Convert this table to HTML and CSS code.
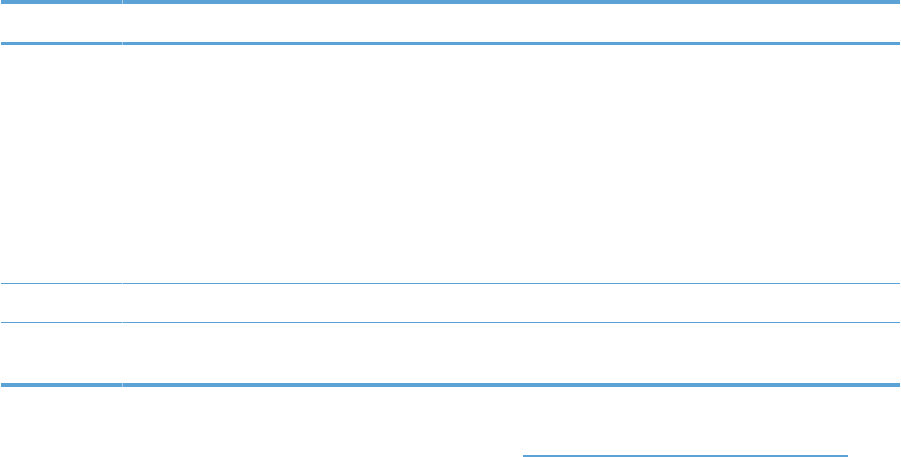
FILE: index.html
```
<!DOCTYPE html>
<html lang="en">
<head>
  <meta charset="UTF-8" />
  <meta name="viewport" content="width=device-width, initial-scale=1.0"/>
  <title>Table</title>
  <link rel="stylesheet" href="styles.css">
</head>
<body>
  <div class="table">
    <div class="rule thick"><span class="left"></span><span class="right"></span></div>
    <div class="row head"></div>
    <div class="rule mid"><span class="left"></span><span class="right"></span></div>
    <div class="row tall"></div>
    <div class="rule thin"><span class="left"></span><span class="right"></span></div>
    <div class="row short"></div>
    <div class="rule thin"><span class="left"></span><span class="right"></span></div>
    <div class="row last"></div>
    <div class="rule thick"><span class="left"></span><span class="right"></span></div>
  </div>

  <div class="after">
    <a class="link" href="#"></a>
  </div>
</body>
</html>
```

FILE: styles.css
```
* {
  box-sizing: border-box;
  margin: 0;
  padding: 0;
}
body {
  background: #ffffff;
  font-family: 'Liberation Sans', Arial, sans-serif;
  width: 901px;
  height: 457px;
  overflow: hidden;
}
.table {
  margin-left: 1px;
  width: 899px;
}
.rule {
  display: flex;
  gap: 1px;
  background: #a9cdea;
}
.rule .left {
  width: 121px;
  background: #5ba3d6;
}
.rule .right {
  flex: 1;
  background: #5ba3d6;
}
.rule.thick { height: 4px; }
.rule.mid { height: 3px; }
.rule.thin { height: 1px; }

.row.head { height: 38px; }
.row.tall { height: 238px; }
.row.short { height: 38px; }
.row.last { height: 60px; }

.after {
  padding-top: 68px;
  padding-left: 523px;
}
.link {
  display: block;
  width: 325px;
  height: 2px;
  background: #5ba3d6;
}
```
